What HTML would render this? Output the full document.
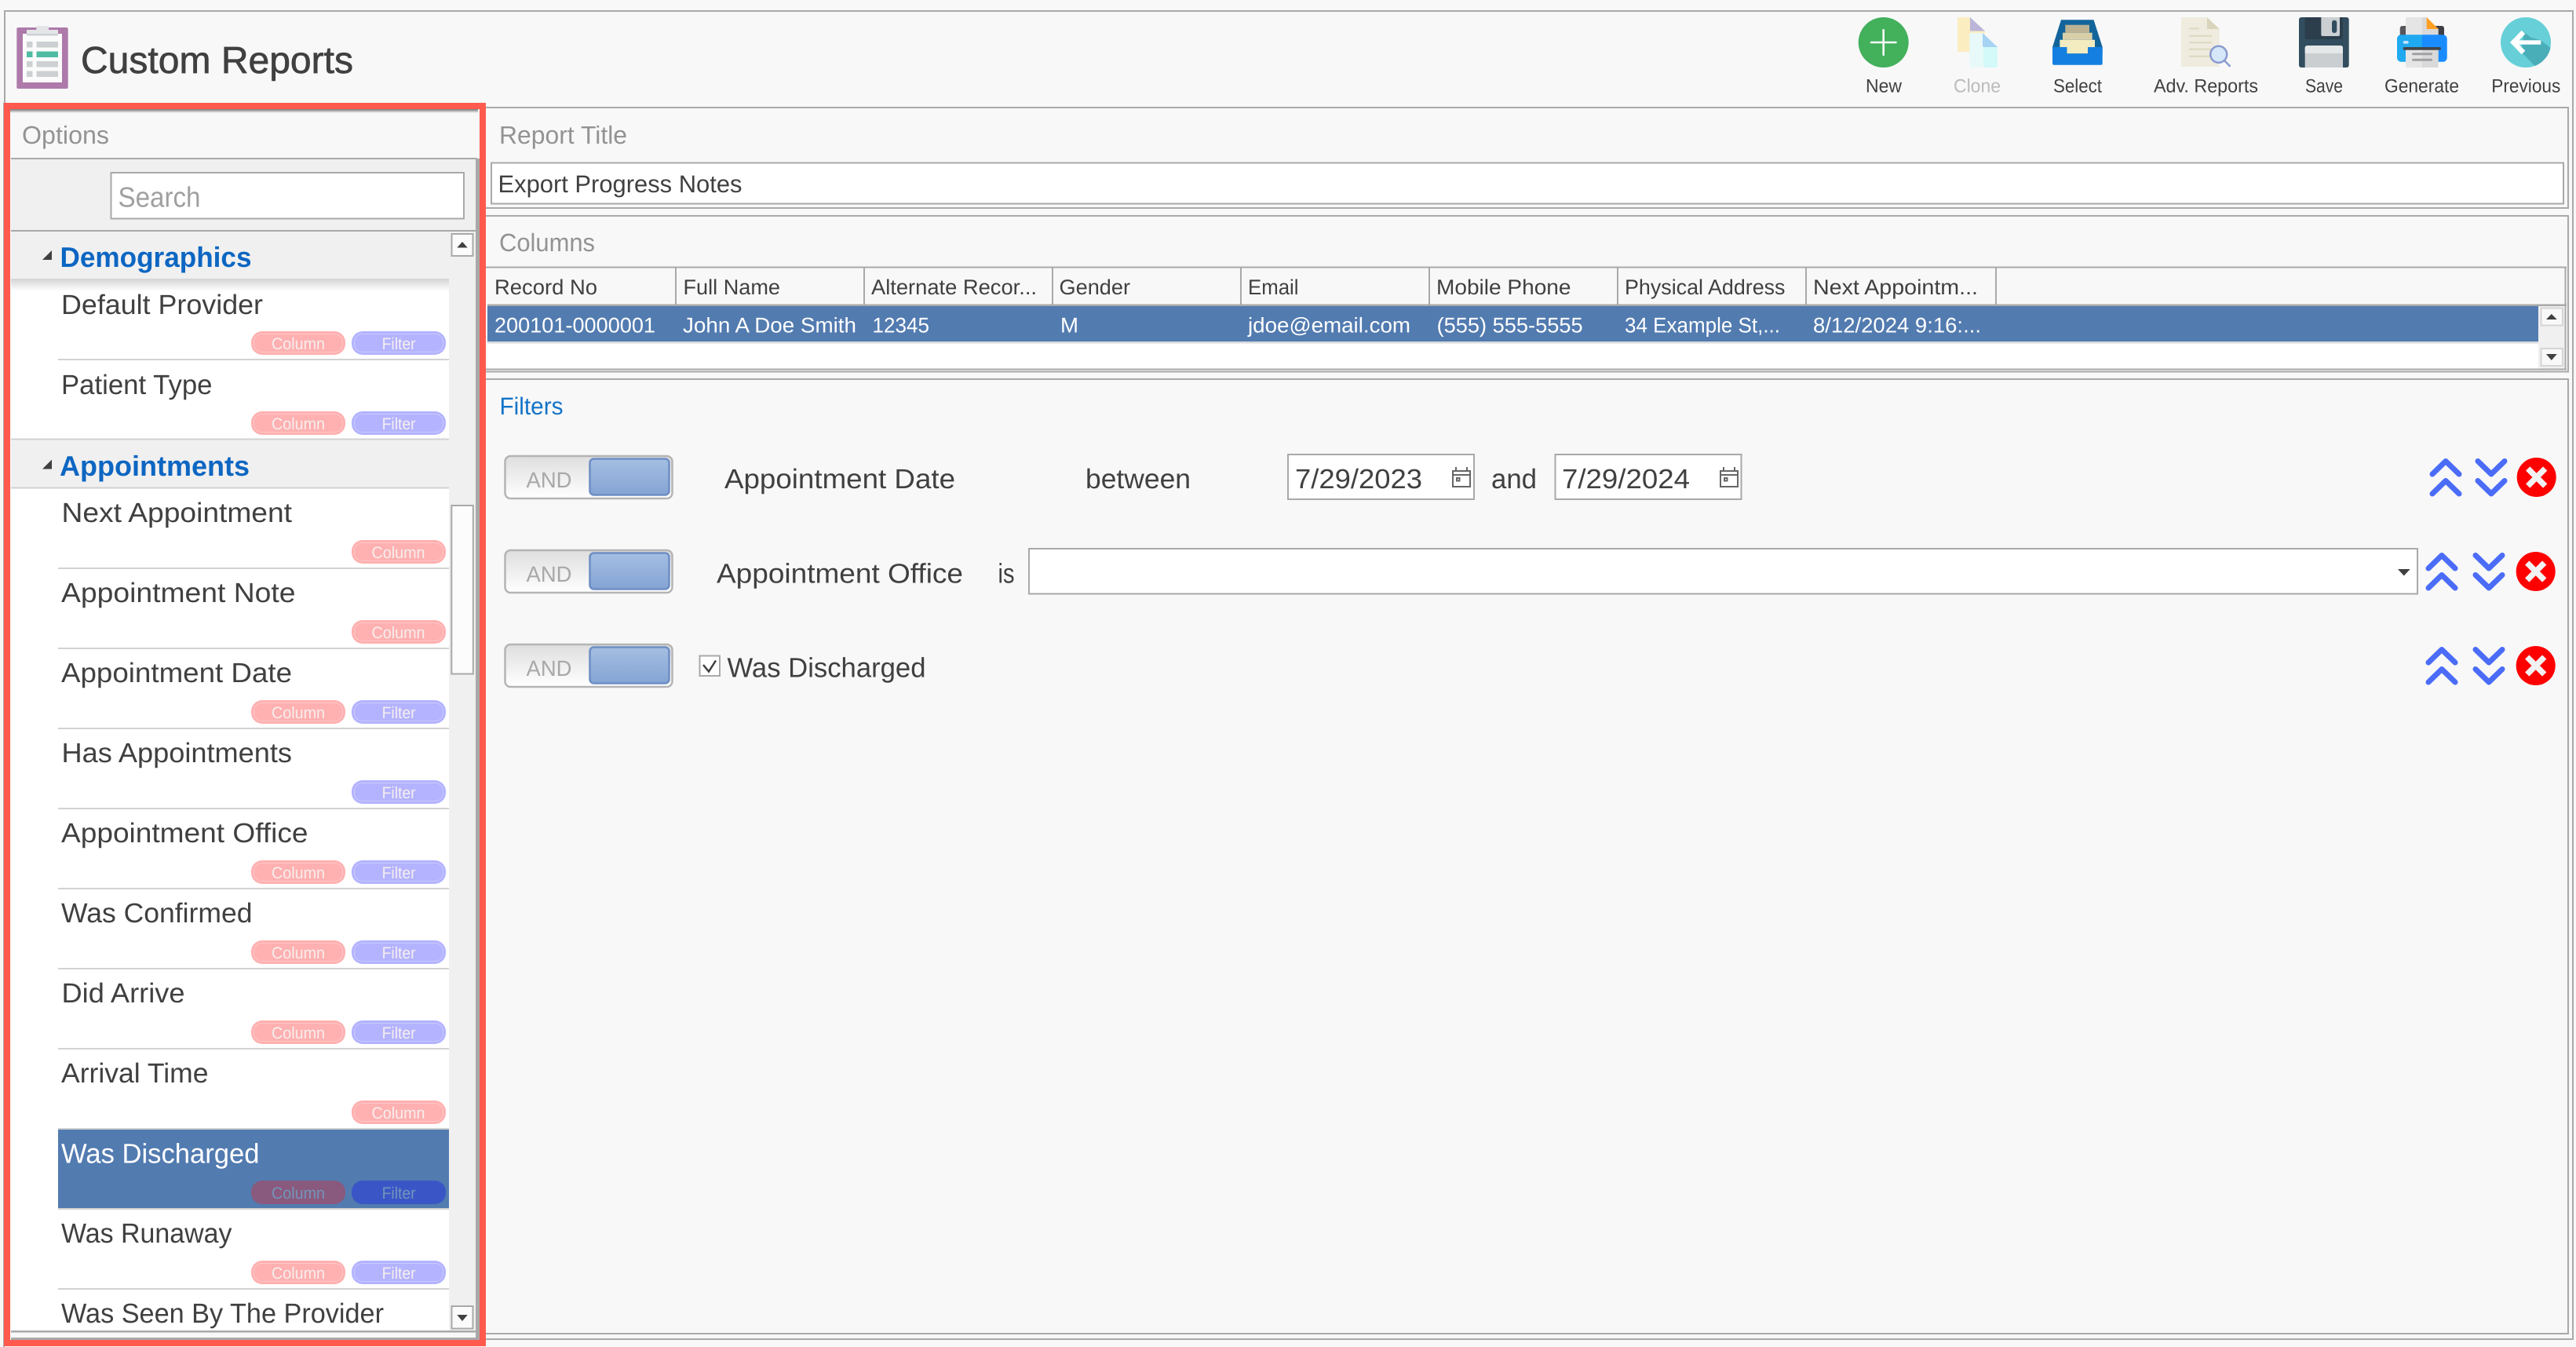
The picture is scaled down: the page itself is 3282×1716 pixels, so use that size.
<!DOCTYPE html>
<html lang="en">
<head>
<meta charset="utf-8">
<title>Custom Reports</title>
<style>
html,body{margin:0;padding:0;background:#f8f8f8;width:3282px;height:1716px;overflow:hidden}
svg{display:block}
text{font-family:"Liberation Sans",sans-serif;fill:#404040;text-rendering:geometricPrecision;white-space:pre}
.g{fill:#939393}
.w{fill:#fff}
.b{fill:#0d66c2;font-weight:bold}
.t{fill:#f6eeee}
.d{fill:#7394bb}
.tb{font-size:24px}
.l{font-size:35px}
.p{font-size:21px}
.h{font-size:27px}
.and{fill:#a8a8a8;font-size:28px}
.line{fill:#a9a9a9}
.sep{fill:#d2d2d2}
.col{fill:#ffb0b0}
.fil{fill:#b3b3ff}
.in{fill:none;stroke:#fff;stroke-opacity:.3;stroke-width:1}
.ch{fill:none;stroke:#4a6cf7;stroke-width:7;stroke-linecap:round;stroke-linejoin:round}
</style>
</head>
<body>
<svg width="3282" height="1716" viewBox="0 0 3282 1716" xmlns="http://www.w3.org/2000/svg">
<defs>
<linearGradient id="tg" x1="0" y1="0" x2="0" y2="1"><stop offset="0" stop-color="#dedede"/><stop offset="1" stop-color="#ffffff"/></linearGradient>
<linearGradient id="kg" x1="0" y1="0" x2="0" y2="1"><stop offset="0" stop-color="#a5bee2"/><stop offset="1" stop-color="#85a4d4"/></linearGradient>
<linearGradient id="sh" x1="0" y1="0" x2="0" y2="1"><stop offset="0" stop-color="#5e5e5e"/><stop offset="1" stop-color="#f8f8f8"/></linearGradient>
<linearGradient id="sw" x1="0" y1="0" x2="0" y2="1"><stop offset="0" stop-color="#d4d4d4"/><stop offset="1" stop-color="#ffffff"/></linearGradient>
<g id="tog">
<rect x="643.5" y="1" width="213" height="54" rx="7" fill="url(#tg)" stroke="#b4b4b4" stroke-width="2.5"/>
<rect x="751.5" y="4.5" width="101" height="46" rx="5" fill="url(#kg)" stroke="#6d8ec4" stroke-width="2.5"/>
</g>
<g id="cal" fill="none" stroke="#666" stroke-width="2">
<rect x="1" y="5" width="22" height="20"/><path d="M1 10H23M5 0V5M19 0V5"/><rect x="6" y="14" width="3.5" height="3.5"/>
</g>
<g id="up"><path class="ch" d="M4 21 21 4.500 38 21M4 46 21 29.500 38 46"/></g>
<g id="dn"><path class="ch" d="M4 4.500 21 21 38 4.500M4 29.500 21 46 38 29.500"/></g>
<g id="xx"><circle r="25" fill="#fe0000"/><path d="M-11 -11 11 11M11 -11 -11 11" stroke="#f2f2f2" stroke-width="7.500" fill="none"/></g>
</defs>

<rect width="3282" height="1716" fill="#f8f8f8"/>

<!-- outer frame -->
<rect x="5" y="13" width="3273" height="2" class="line"/>
<rect x="5" y="13" width="2" height="120" class="line"/>
<rect x="3277" y="13" width="2" height="1694" class="line"/>
<rect x="619" y="1705" width="2660" height="2" class="line"/>

<!-- title -->
<rect x="21.300" y="35" width="65.400" height="78" rx="2" fill="#ad7aaa"/>
<rect x="29" y="43" width="50" height="62" fill="#fbfbfb"/>
<rect x="46.300" y="33" width="15.700" height="6" fill="#e3e5e6"/>
<rect x="34" y="38" width="40" height="5.500" fill="#e3e5e6"/>
<rect x="34" y="43" width="40" height="2.500" fill="#cdd0d2"/>
<rect x="34" y="53" width="7.500" height="7.500" fill="#cdd0d2"/><rect x="46.500" y="53" width="27.500" height="7.500" fill="#cdd0d2"/>
<rect x="34" y="65.500" width="7.500" height="7.500" fill="#4fbba3"/><rect x="46.500" y="65.500" width="27.500" height="7.500" fill="#4fbba3"/>
<rect x="34" y="78" width="7.500" height="7.500" fill="#cdd0d2"/><rect x="46.500" y="78" width="27.500" height="7.500" fill="#cdd0d2"/>
<rect x="34" y="90.500" width="7.500" height="7.500" fill="#cdd0d2"/><rect x="46.500" y="90.500" width="27.500" height="7.500" fill="#cdd0d2"/>
<text x="103" y="93" font-size="48" stroke="#404040" stroke-width=".7" textLength="347" lengthAdjust="spacingAndGlyphs">Custom Reports</text>

<!-- toolbar -->
<circle cx="2399.700" cy="54" r="32" fill="#43b05c"/>
<rect x="2382.700" y="52.700" width="34" height="2.600" rx="1" fill="#fff"/>
<rect x="2398.400" y="37" width="2.600" height="34" rx="1" fill="#fff"/>
<text x="2377" y="117.500" class="tb" textLength="46" lengthAdjust="spacingAndGlyphs">New</text>

<path d="M2496 22H2510V66H2496a2 2 0 0 1-2-2V24a2 2 0 0 1 2-2Z" fill="#fbedc0"/>
<rect x="2510" y="39" width="19" height="27" fill="#fbedc0"/>
<path d="M2510 22 2529 39.500H2510Z" fill="#bbb5d8"/>
<path d="M2511.300 42H2527V86H2511.300a2 2 0 0 1-2-2V44a2 2 0 0 1 2-2Z" fill="#e8f9f9"/>
<rect x="2527" y="59" width="18" height="27" rx="1" fill="#d3f9f9"/>
<path d="M2526 42 2545 60H2528a2 2 0 0 1-2-2Z" fill="#a7d3f3"/>
<text x="2489" y="117.500" class="tb" style="fill:#bbb" textLength="60" lengthAdjust="spacingAndGlyphs">Clone</text>

<path d="M2626 25.300H2667.500L2678.700 60V70H2615V60Z" fill="#13649b"/>
<rect x="2631.300" y="31.700" width="30.700" height="10" fill="#bcb294"/>
<rect x="2628" y="41.700" width="37.700" height="9" fill="#d8cfa8"/>
<path d="M2624.300 50.700H2669V60H2660V68.300H2633.300V60H2624.300Z" fill="#f3ecc0"/>
<path d="M2615 60H2633.300V68.300H2660V60H2678.700V80.700a2 2 0 0 1-2 2H2617a2 2 0 0 1-2-2Z" fill="#147fe0"/>
<text x="2616" y="117.500" class="tb" textLength="62" lengthAdjust="spacingAndGlyphs">Select</text>

<path d="M2779 22H2812L2827.700 37V85H2779Z" fill="#efebde"/>
<path d="M2812 22 2827.700 37H2812Z" fill="#d9d5bc"/>
<g fill="#dcd8c0"><rect x="2789" y="35.500" width="12.700" height="2"/><rect x="2789" y="44.700" width="29" height="2"/><rect x="2789" y="53.300" width="29" height="2"/><rect x="2789" y="61.700" width="29" height="2"/><rect x="2789" y="70.700" width="27" height="2"/></g>
<circle cx="2826.700" cy="69.300" r="10.500" fill="#d5e7f8" stroke="#8b9bd0" stroke-width="2.500"/>
<path d="M2834 77 2841.500 84.800" stroke="#8b9bd0" stroke-width="2.500" fill="none"/>
<text x="2744" y="117.500" class="tb" textLength="133" lengthAdjust="spacingAndGlyphs">Adv. Reports</text>

<rect x="2929" y="22" width="63.700" height="64" rx="3" fill="#324d5e"/>
<path d="M2936.700 22H2985V47a3 3 0 0 1-3 3H2939.700a3 3 0 0 1-3-3Z" fill="#2c3e4c"/>
<path d="M2957.300 22H2981V44a2 2 0 0 1-2 2H2959.300a2 2 0 0 1-2-2Z" fill="#cbcfd2"/>
<rect x="2971" y="25.700" width="6.300" height="16.300" rx="3" fill="#324d5e"/>
<path d="M2936.700 86V61a3 3 0 0 1 3-3H2982a3 3 0 0 1 3 3V86Z" fill="#cbced1"/>
<path d="M2936.700 68V61a3 3 0 0 1 3-3H2982a3 3 0 0 1 3 3V68Z" fill="#e4e8e9"/>
<text x="2937" y="117.500" class="tb" textLength="48" lengthAdjust="spacingAndGlyphs">Save</text>

<path d="M3057.700 50V36a3 3 0 0 1 3-3H3086V50Z" fill="#56565c"/>
<path d="M3086 33H3111a3 3 0 0 1 3 3V50H3086Z" fill="#3e3e44"/>
<path d="M3065 50V24a2 2 0 0 1 2-2H3086V50Z" fill="#e5e5e5"/>
<path d="M3086 22H3091.700L3106.700 37V50H3086Z" fill="#d9d9d9"/>
<path d="M3091.700 22 3106.700 37H3091.700Z" fill="#ff9f22"/>
<path d="M3086 44.300H3059a5 5 0 0 0-5 5V73.700a5 5 0 0 0 5 5H3086Z" fill="#1fa9f0"/>
<path d="M3086 44.300H3112.700a5 5 0 0 1 5 5V73.700a5 5 0 0 1-5 5H3086Z" fill="#1a8cff"/>
<rect x="3061.700" y="52" width="7" height="3.700" rx="1.800" fill="#bfe0ff"/>
<path d="M3065 62H3086V86H3067a2 2 0 0 1-2-2Z" fill="#e5e5e5"/>
<path d="M3086 62H3106.700V84a2 2 0 0 1-2 2H3086Z" fill="#d9d9d9"/>
<rect x="3061.700" y="60" width="48.300" height="3.700" rx="1.800" fill="#444448"/>
<rect x="3073" y="67.200" width="26" height="3" rx="1.500" fill="#a0a0a4"/>
<rect x="3073" y="74.800" width="26" height="3" rx="1.500" fill="#a0a0a4"/>
<text x="3038" y="117.500" class="tb" textLength="95" lengthAdjust="spacingAndGlyphs">Generate</text>

<circle cx="3218" cy="54" r="32" fill="#66cfd8"/>
<path d="M3216 41 3225 48 3237 51 3249.500 61A32 32 0 0 1 3229.500 84L3212 66Z" fill="#4aaeb9"/>
<path d="M3215 41 3202.500 54 3215 67" fill="none" stroke="#fff" stroke-width="6.500"/>
<rect x="3204" y="51.300" width="33.300" height="5.400" fill="#fff"/>
<text x="3174.300" y="117.500" class="tb" textLength="88" lengthAdjust="spacingAndGlyphs">Previous</text>

<!-- right panels -->
<rect x="619" y="136" width="2653" height="2" class="line"/>
<rect x="3271" y="136" width="2" height="130" class="line"/>
<rect x="619" y="264" width="2654" height="2" class="line"/>
<text x="636" y="183" font-size="32" class="g" textLength="163" lengthAdjust="spacingAndGlyphs">Report Title</text>
<rect x="626" y="207.500" width="2640" height="52" fill="#fff" stroke="#a9a9a9" stroke-width="2"/>
<text x="634.500" y="245" font-size="31" textLength="311" lengthAdjust="spacingAndGlyphs">Export Progress Notes</text>

<rect x="619" y="274" width="2654" height="2" class="line"/>
<rect x="3271" y="274" width="2" height="200" class="line"/>
<text x="636" y="320" font-size="32" class="g" textLength="122" lengthAdjust="spacingAndGlyphs">Columns</text>

<!-- grid -->
<rect x="621" y="437" width="2613" height="33" fill="#fff"/>
<rect x="621" y="389" width="2613" height="46" fill="#527bb0"/>
<rect x="621" y="435" width="2613" height="2.500" fill="#d5d9de"/>
<rect x="3234" y="389" width="33" height="81" fill="#f0f0f0"/>
<rect x="3237.500" y="392.500" width="27.500" height="22" fill="#f8f8f8" stroke="#d5d5d5" stroke-width="2"/>
<rect x="3237.500" y="444" width="27.500" height="22" fill="#f8f8f8" stroke="#d5d5d5" stroke-width="2"/>
<path d="M3244 407 3250.800 400 3257.700 407Z" fill="#404040"/>
<path d="M3244 451 3250.800 459 3257.700 451Z" fill="#404040"/>
<rect x="619" y="339.500" width="2651" height="2" class="line"/>
<rect x="621" y="387.500" width="2649" height="2.500" class="line"/>
<rect x="619" y="469.500" width="2651" height="2" class="line"/>
<rect x="3267.500" y="340" width="2" height="131" class="line"/>
<g class="line"><rect x="860" y="341" width="2" height="47"/><rect x="1100" y="341" width="2" height="47"/><rect x="1340" y="341" width="2" height="47"/><rect x="1580" y="341" width="2" height="47"/><rect x="1820" y="341" width="2" height="47"/><rect x="2060" y="341" width="2" height="47"/><rect x="2300" y="341" width="2" height="47"/><rect x="2542" y="341" width="2" height="47"/></g>
<text x="630" y="375" class="h" textLength="131" lengthAdjust="spacingAndGlyphs">Record No</text>
<text x="870.500" y="375" class="h" textLength="123.500" lengthAdjust="spacingAndGlyphs">Full Name</text>
<text x="1110" y="375" class="h" textLength="211" lengthAdjust="spacingAndGlyphs">Alternate Recor...</text>
<text x="1349.500" y="375" class="h" textLength="90.500" lengthAdjust="spacingAndGlyphs">Gender</text>
<text x="1590" y="375" class="h" textLength="64.500" lengthAdjust="spacingAndGlyphs">Email</text>
<text x="1830" y="375" class="h" textLength="171.500" lengthAdjust="spacingAndGlyphs">Mobile Phone</text>
<text x="2070" y="375" class="h" textLength="204.500" lengthAdjust="spacingAndGlyphs">Physical Address</text>
<text x="2310" y="375" class="h" textLength="210" lengthAdjust="spacingAndGlyphs">Next Appointm...</text>
<text x="630" y="423.300" class="h w" textLength="205" lengthAdjust="spacingAndGlyphs">200101-0000001</text>
<text x="870" y="423.300" class="h w" textLength="221" lengthAdjust="spacingAndGlyphs">John A Doe Smith</text>
<text x="1111.500" y="423.300" class="h w" textLength="72.500" lengthAdjust="spacingAndGlyphs">12345</text>
<text x="1351" y="423.300" class="h w" textLength="23" lengthAdjust="spacingAndGlyphs">M</text>
<text x="1590" y="423.300" class="h w" textLength="207" lengthAdjust="spacingAndGlyphs">jdoe@email.com</text>
<text x="1830.600" y="423.300" class="h w" textLength="186" lengthAdjust="spacingAndGlyphs">(555) 555-5555</text>
<text x="2070" y="423.300" class="h w" textLength="198" lengthAdjust="spacingAndGlyphs">34 Example St,...</text>
<text x="2310" y="423.300" class="h w" textLength="214" lengthAdjust="spacingAndGlyphs">8/12/2024 9:16:...</text>
<rect x="619" y="472.500" width="2654" height="2" class="line"/>

<!-- filters -->
<rect x="619" y="482" width="2654" height="2" class="line"/>
<rect x="3271" y="482" width="2" height="1218" class="line"/>
<rect x="619" y="1698" width="2654" height="2" class="line"/>
<text x="636.500" y="528" font-size="31" style="fill:#1373c8" textLength="81" lengthAdjust="spacingAndGlyphs">Filters</text>

<use href="#tog" y="580"/>
<text x="670.500" y="621" class="and" textLength="58" lengthAdjust="spacingAndGlyphs">AND</text>
<text x="923" y="622" class="l" textLength="294" lengthAdjust="spacingAndGlyphs">Appointment Date</text>
<text x="1383" y="622" class="l" textLength="134" lengthAdjust="spacingAndGlyphs">between</text>
<rect x="1641" y="579" width="237" height="57" fill="#fff" stroke="#a9a9a9" stroke-width="2"/>
<text x="1650" y="622" class="l" textLength="162" lengthAdjust="spacingAndGlyphs">7/29/2023</text>
<use href="#cal" x="1850" y="595"/>
<text x="1900" y="622" class="l" textLength="58" lengthAdjust="spacingAndGlyphs">and</text>
<rect x="1981.500" y="579" width="237" height="57" fill="#fff" stroke="#a9a9a9" stroke-width="2"/>
<text x="1990" y="622" class="l" textLength="163" lengthAdjust="spacingAndGlyphs">7/29/2024</text>
<use href="#cal" x="2191" y="595"/>
<use href="#up" x="3095" y="583"/>
<use href="#dn" x="3153" y="583"/>
<use href="#xx" x="3231.700" y="608"/>

<use href="#tog" y="700"/>
<text x="670.500" y="741" class="and" textLength="58" lengthAdjust="spacingAndGlyphs">AND</text>
<text x="913" y="742.300" class="l" textLength="314" lengthAdjust="spacingAndGlyphs">Appointment Office</text>
<text x="1271.500" y="742.300" class="l" textLength="21" lengthAdjust="spacingAndGlyphs">is</text>
<rect x="1311" y="699" width="1769" height="57.500" fill="#fff" stroke="#a9a9a9" stroke-width="2"/>
<path d="M3055 725H3070.700L3062.800 733.500Z" fill="#404040"/>
<use href="#up" x="3090" y="703"/>
<use href="#dn" x="3150" y="703"/>
<use href="#xx" x="3230.700" y="728"/>

<use href="#tog" y="820"/>
<text x="670.500" y="861" class="and" textLength="58" lengthAdjust="spacingAndGlyphs">AND</text>
<rect x="891.500" y="835.500" width="25.500" height="25.500" fill="#fff" stroke="#a9a9a9" stroke-width="2"/>
<path d="M896 847 903 855.500 912 841.500" fill="none" stroke="#404040" stroke-width="2.500"/>
<text x="926.500" y="862.300" class="l" textLength="253" lengthAdjust="spacingAndGlyphs">Was Discharged</text>
<use href="#up" x="3090" y="823"/>
<use href="#dn" x="3150" y="823"/>
<use href="#xx" x="3230.700" y="848"/>

<!-- options panel -->
<rect x="13" y="138" width="596" height="1570" fill="#f8f8f8"/>
<rect x="14" y="202" width="592" height="1493" fill="#f0f0f0"/>
<rect x="13" y="138" width="596" height="6" fill="url(#sh)"/>
<text x="28" y="183" font-size="32" class="g" textLength="111" lengthAdjust="spacingAndGlyphs">Options</text>
<rect x="14" y="201" width="594" height="2" class="line"/>
<rect x="141.500" y="220" width="449.500" height="58.500" fill="#fff" stroke="#a9a9a9" stroke-width="2"/>
<text x="150.500" y="263.500" font-size="36" style="fill:#a0a0a0" textLength="105" lengthAdjust="spacingAndGlyphs">Search</text>
<rect x="14" y="293" width="592" height="2" class="line"/>
<rect x="575.500" y="298" width="27" height="28" fill="#fbfbfb" stroke="#a9a9a9" stroke-width="2"/>
<path d="M582.300 315.500 589 308 595.700 315.500Z" fill="#404040"/>
<path d="M54 331H66V319Z" fill="#404040"/>
<text x="76.500" y="340" font-size="36" class="b" textLength="244" lengthAdjust="spacingAndGlyphs">Demographics</text>

<rect x="14" y="355" width="558" height="205" fill="#fff"/>
<rect x="14" y="355" width="558" height="16" fill="url(#sw)"/>
<rect x="74" y="457" width="498" height="2" class="sep"/>
<rect x="14" y="558.500" width="558" height="2" class="sep"/>
<path d="M54 597.500H66V585.500Z" fill="#404040"/>
<text x="76" y="606" font-size="36" class="b" textLength="242" lengthAdjust="spacingAndGlyphs">Appointments</text>

<rect x="14" y="622" width="558" height="1073" fill="#fff"/>
<rect x="14" y="620.500" width="558" height="2" class="sep"/>
<g class="sep">
<rect x="74" y="723" width="498" height="2"/><rect x="74" y="825" width="498" height="2"/><rect x="74" y="927" width="498" height="2"/><rect x="74" y="1029" width="498" height="2"/><rect x="74" y="1131" width="498" height="2"/><rect x="74" y="1233" width="498" height="2"/><rect x="74" y="1335" width="498" height="2"/><rect x="74" y="1437" width="498" height="2"/><rect x="74" y="1539" width="498" height="2"/><rect x="74" y="1641" width="498" height="2"/>
</g>
<rect x="74" y="1439" width="498" height="100" fill="#527bb0"/>

<rect x="575.300" y="644" width="27.500" height="214.500" fill="#fcfcfc" stroke="#a9a9a9" stroke-width="2"/>
<rect x="575.500" y="1664" width="27" height="28.500" fill="#fbfbfb" stroke="#a9a9a9" stroke-width="2"/>
<path d="M582.300 1675 589 1683 595.700 1675Z" fill="#404040"/>

<text x="78" y="400" class="l" textLength="257" lengthAdjust="spacingAndGlyphs">Default Provider</text>
<text x="78" y="502" class="l" textLength="192.500" lengthAdjust="spacingAndGlyphs">Patient Type</text>
<text x="78.500" y="665" class="l" textLength="293.500" lengthAdjust="spacingAndGlyphs">Next Appointment</text>
<text x="78" y="767" class="l" textLength="298.500" lengthAdjust="spacingAndGlyphs">Appointment Note</text>
<text x="78" y="869" class="l" textLength="294" lengthAdjust="spacingAndGlyphs">Appointment Date</text>
<text x="78.500" y="971" class="l" textLength="293.500" lengthAdjust="spacingAndGlyphs">Has Appointments</text>
<text x="78" y="1073" class="l" textLength="314.500" lengthAdjust="spacingAndGlyphs">Appointment Office</text>
<text x="78" y="1175" class="l" textLength="243.500" lengthAdjust="spacingAndGlyphs">Was Confirmed</text>
<text x="78.500" y="1277" class="l" textLength="157" lengthAdjust="spacingAndGlyphs">Did Arrive</text>
<text x="78" y="1379" class="l" textLength="187.500" lengthAdjust="spacingAndGlyphs">Arrival Time</text>
<text x="78" y="1481.500" class="l w" textLength="252.500" lengthAdjust="spacingAndGlyphs">Was Discharged</text>
<text x="78" y="1583" class="l" textLength="217.500" lengthAdjust="spacingAndGlyphs">Was Runaway</text>
<text x="78" y="1685" class="l" textLength="411" lengthAdjust="spacingAndGlyphs">Was Seen By The Provider</text>

<!-- pills -->
<g>
<rect x="320" y="422" width="120" height="30" rx="14" class="col"/><rect x="323.500" y="425.500" width="113" height="23" rx="10" class="in"/><text x="346" y="445" class="p t" textLength="68" lengthAdjust="spacingAndGlyphs">Column</text>
<rect x="448" y="422" width="120" height="30" rx="14" class="fil"/><rect x="451.500" y="425.500" width="113" height="23" rx="10" class="in"/><text x="486.600" y="445" class="p t" textLength="43" lengthAdjust="spacingAndGlyphs">Filter</text>
<rect x="320" y="524" width="120" height="30" rx="14" class="col"/><rect x="323.500" y="527.500" width="113" height="23" rx="10" class="in"/><text x="346" y="547" class="p t" textLength="68" lengthAdjust="spacingAndGlyphs">Column</text>
<rect x="448" y="524" width="120" height="30" rx="14" class="fil"/><rect x="451.500" y="527.500" width="113" height="23" rx="10" class="in"/><text x="486.600" y="547" class="p t" textLength="43" lengthAdjust="spacingAndGlyphs">Filter</text>

<rect x="448" y="688" width="120" height="30" rx="14" class="col"/><rect x="451.500" y="691.500" width="113" height="23" rx="10" class="in"/><text x="473.500" y="711" class="p t" textLength="68" lengthAdjust="spacingAndGlyphs">Column</text>
<rect x="448" y="790" width="120" height="30" rx="14" class="col"/><rect x="451.500" y="793.500" width="113" height="23" rx="10" class="in"/><text x="473.500" y="813" class="p t" textLength="68" lengthAdjust="spacingAndGlyphs">Column</text>

<rect x="320" y="892" width="120" height="30" rx="14" class="col"/><rect x="323.500" y="895.500" width="113" height="23" rx="10" class="in"/><text x="346" y="915" class="p t" textLength="68" lengthAdjust="spacingAndGlyphs">Column</text>
<rect x="448" y="892" width="120" height="30" rx="14" class="fil"/><rect x="451.500" y="895.500" width="113" height="23" rx="10" class="in"/><text x="486.600" y="915" class="p t" textLength="43" lengthAdjust="spacingAndGlyphs">Filter</text>

<rect x="448" y="994" width="120" height="30" rx="14" class="fil"/><rect x="451.500" y="997.500" width="113" height="23" rx="10" class="in"/><text x="486.600" y="1017" class="p t" textLength="43" lengthAdjust="spacingAndGlyphs">Filter</text>

<rect x="320" y="1096" width="120" height="30" rx="14" class="col"/><rect x="323.500" y="1099.500" width="113" height="23" rx="10" class="in"/><text x="346" y="1119" class="p t" textLength="68" lengthAdjust="spacingAndGlyphs">Column</text>
<rect x="448" y="1096" width="120" height="30" rx="14" class="fil"/><rect x="451.500" y="1099.500" width="113" height="23" rx="10" class="in"/><text x="486.600" y="1119" class="p t" textLength="43" lengthAdjust="spacingAndGlyphs">Filter</text>

<rect x="320" y="1198" width="120" height="30" rx="14" class="col"/><rect x="323.500" y="1201.500" width="113" height="23" rx="10" class="in"/><text x="346" y="1221" class="p t" textLength="68" lengthAdjust="spacingAndGlyphs">Column</text>
<rect x="448" y="1198" width="120" height="30" rx="14" class="fil"/><rect x="451.500" y="1201.500" width="113" height="23" rx="10" class="in"/><text x="486.600" y="1221" class="p t" textLength="43" lengthAdjust="spacingAndGlyphs">Filter</text>

<rect x="320" y="1300" width="120" height="30" rx="14" class="col"/><rect x="323.500" y="1303.500" width="113" height="23" rx="10" class="in"/><text x="346" y="1323" class="p t" textLength="68" lengthAdjust="spacingAndGlyphs">Column</text>
<rect x="448" y="1300" width="120" height="30" rx="14" class="fil"/><rect x="451.500" y="1303.500" width="113" height="23" rx="10" class="in"/><text x="486.600" y="1323" class="p t" textLength="43" lengthAdjust="spacingAndGlyphs">Filter</text>

<rect x="448" y="1402" width="120" height="30" rx="14" class="col"/><rect x="451.500" y="1405.500" width="113" height="23" rx="10" class="in"/><text x="473.500" y="1425" class="p t" textLength="68" lengthAdjust="spacingAndGlyphs">Column</text>

<rect x="320" y="1504" width="120" height="30" rx="14" fill="#895a7d"/><text x="346" y="1527" class="p d" textLength="68" lengthAdjust="spacingAndGlyphs">Column</text>
<rect x="448" y="1504" width="120" height="30" rx="14" fill="#3a56c6"/><text x="486.600" y="1527" class="p d" textLength="43" lengthAdjust="spacingAndGlyphs">Filter</text>

<rect x="320" y="1606" width="120" height="30" rx="14" class="col"/><rect x="323.500" y="1609.500" width="113" height="23" rx="10" class="in"/><text x="346" y="1629" class="p t" textLength="68" lengthAdjust="spacingAndGlyphs">Column</text>
<rect x="448" y="1606" width="120" height="30" rx="14" class="fil"/><rect x="451.500" y="1609.500" width="113" height="23" rx="10" class="in"/><text x="486.600" y="1629" class="p t" textLength="43" lengthAdjust="spacingAndGlyphs">Filter</text>
</g>

<!-- panel edges -->
<rect x="14" y="1695" width="592" height="2.500" class="line"/>
<rect x="14" y="1697.500" width="597" height="8" fill="#f8f8f8"/>
<rect x="14" y="1704" width="597" height="3" class="line"/>
<rect x="606" y="202" width="5" height="1503" class="line"/>
<rect x="4" y="131" width="2" height="1585" class="line"/>

<!-- red highlight -->
<rect x="9" y="135" width="606" height="1576" fill="none" stroke="#ff5a4d" stroke-width="8"/>
</svg>
</body>
</html>
